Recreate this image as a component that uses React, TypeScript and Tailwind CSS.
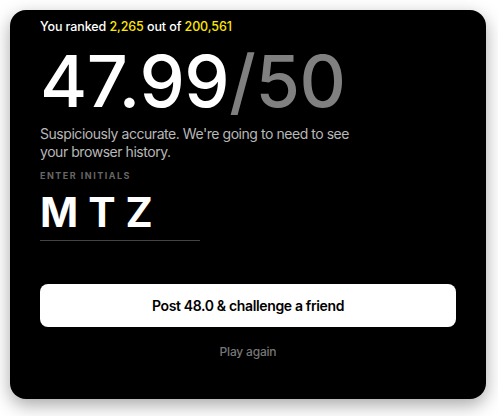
const App: React.FC = () => {
  return (
    <div className="min-h-screen bg-white p-[10px] font-['Inter',sans-serif]">
      <div className="w-[476px] h-[389px] bg-black rounded-[16px] shadow-[0_6px_18px_rgba(0,0,0,0.35)] px-[30px] pt-[7px] flex flex-col">
        <p className="text-[12.5px] leading-[20px] font-medium text-white tracking-[-0.1px]">
          You ranked <span className="text-[#ffe600]">2,265</span> out of{" "}
          <span className="text-[#ffe600]">200,561</span>
        </p>
        <h1 className="mt-[8px] text-[72px] leading-none font-medium text-white tracking-[-0.4px]">
          47.99<span className="text-[#808080]">/50</span>
        </h1>
        <p className="mt-[8px] max-w-[340px] text-[14px] leading-[18px] text-[#b8b8b8] tracking-[-0.45px]">
          Suspiciously accurate. We're going to need to see your browser history.
        </p>
        <p className="mt-[9px] text-[9px] leading-[12px] font-bold tracking-[1.5px] text-[#666]">
          ENTER INITIALS
        </p>
        <div className="mt-[6px] w-[160px] border-b border-[#444] pb-[4px]">
          <span className="text-[41px] leading-[48px] font-bold text-white tracking-[10px]">
            MTZ
          </span>
        </div>
        <button className="mt-[43px] h-[43px] w-full bg-white rounded-[8px] text-[14px] font-semibold text-black tracking-[-0.35px]">
          Post 48.0 &amp; challenge a friend
        </button>
        <button className="mt-[15px] self-center text-[12px] leading-[20px] font-medium text-[#777] tracking-[-0.2px]">
          Play again
        </button>
      </div>
    </div>
  );
};

export default App;
